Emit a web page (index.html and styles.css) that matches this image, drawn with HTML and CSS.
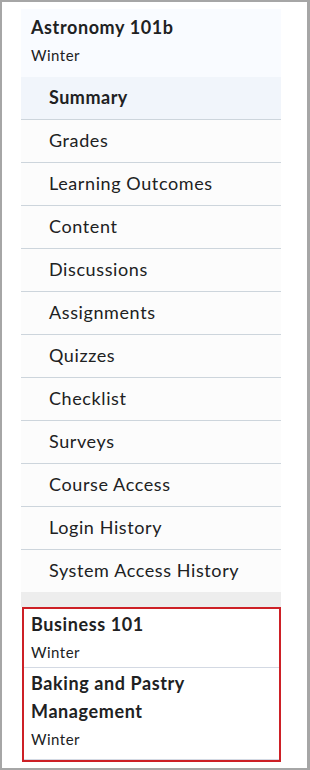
FILE: index.html
```html
<!DOCTYPE html>
<html lang="en">
<head>
    <meta charset="UTF-8">
    <meta name="viewport" content="width=device-width, initial-scale=1.0">
    <title>Course Navigation</title>
    <link rel="stylesheet" href="styles.css">
</head>
<body>
    <div class="frame">
        <div class="panel">
            <div class="course-header">
                <div class="course-title">Astronomy 101b</div>
                <div class="course-term">Winter</div>
            </div>
            <ul class="course-menu">
                <li class="active">Summary</li>
                <li>Grades</li>
                <li>Learning Outcomes</li>
                <li>Content</li>
                <li>Discussions</li>
                <li>Assignments</li>
                <li>Quizzes</li>
                <li>Checklist</li>
                <li>Surveys</li>
                <li>Course Access</li>
                <li>Login History</li>
                <li>System Access History</li>
            </ul>
            <div class="spacer"></div>
            <div class="other-courses">
                <div class="course-item">
                    <div class="course-title">Business 101</div>
                    <div class="course-term">Winter</div>
                </div>
                <div class="course-item">
                    <div class="course-title">Baking and Pastry Management</div>
                    <div class="course-term">Winter</div>
                </div>
            </div>
        </div>
    </div>
</body>
</html>
```

FILE: styles.css
```css
body, html {
    margin: 0;
    background-color: #fff;
    font-family: Lato, "Open Sans", sans-serif;
    color: #202122;
}
.frame {
    width: 310px;
    height: 770px;
    box-sizing: border-box;
    border: 2px solid #a6a6a6;
    border-right-width: 3px;
    padding: 7px 26px 0 19px;
}
.panel {
    width: 260px;
}
.course-header {
    background-color: #f9fbff;
    padding: 4px 10px 8px;
}
.course-title {
    font-size: 18px;
    font-weight: bold;
    line-height: 28px;
    letter-spacing: 0.6px;
}
.course-term {
    font-size: 15px;
    line-height: 28px;
    letter-spacing: 0.5px;
}
.course-menu {
    list-style: none;
    margin: 0;
    padding: 0;
    background-color: #fcfcfc;
}
.course-menu li {
    height: 42px;
    line-height: 40px;
    padding-left: 28px;
    font-size: 18px;
    letter-spacing: 0.6px;
    border-bottom: 1px solid #cdd5dc;
}
.course-menu li:last-child {
    border-bottom: none;
}
.course-menu li.active {
    background-color: #f1f5fb;
    font-weight: bold;
    letter-spacing: 0.5px;
}
.spacer {
    height: 15px;
    background-color: #ededed;
}
.other-courses {
    margin-left: 1px;
    border: 2px solid #cd2026;
    background-color: #fff;
}
.course-item {
    padding: 1px 7px 1px;
    border-bottom: 1px solid #d3d9e3;
}
.course-item + .course-item {
    padding-top: 1px;
    padding-bottom: 6px;
}
```
